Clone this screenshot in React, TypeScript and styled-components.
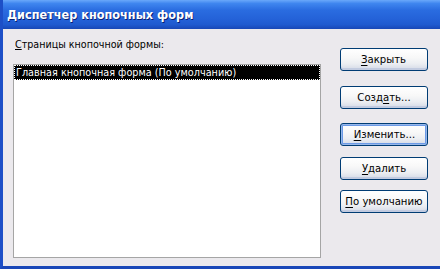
import styled, { createGlobalStyle } from "styled-components"

const GlobalStyle = createGlobalStyle`
  html, body {
    margin: 0;
    padding: 0;
    background: #ebe9ed;
  }
  body {
    font-family: Tahoma, "DejaVu Sans", "Liberation Sans", sans-serif;
  }
`

const Window = styled.div`
  width: 440px;
  height: 269px;
  display: flex;
  flex-direction: column;
  box-sizing: border-box;
  border-left: 3px solid #1d4fc7;
  border-bottom: 3px solid #1a47b8;
  background: #ebe9ed;
  overflow: hidden;
`

const TitleBar = styled.div`
  height: 29px;
  flex: none;
  margin-left: -3px;
  display: flex;
  align-items: center;
  padding-left: 7px;
  background: linear-gradient(
    180deg,
    #6aa8fa 0%,
    #3f86ef 12%,
    #2a6ce0 35%,
    #2462d8 65%,
    #1f5acf 85%,
    #1847b6 100%
  );
`

const TitleText = styled.span`
  display: inline-block;
  color: #fff;
  font-family: "DejaVu Sans", Tahoma, sans-serif;
  font-weight: bold;
  font-size: 13px;
  text-shadow: 1px 1px 0 #0a1f72;
  transform: scaleX(0.87);
  transform-origin: left center;
  white-space: nowrap;
`

const Body = styled.div`
  flex: 1;
  display: flex;
  padding: 9px 0 0 10px;
`

const LeftColumn = styled.div`
  display: flex;
  flex-direction: column;
`

const Caption = styled.div`
  height: 14px;
  line-height: 14px;
  font-size: 11px;
  color: #000;
  margin: 0 0 12px 2px;
  font-family: "DejaVu Sans", sans-serif;
  transform: scaleX(0.87);
  transform-origin: left center;
`

const ListBox = styled.div`
  width: 308px;
  height: 194px;
  box-sizing: border-box;
  background: #fff;
  border: 1px solid #a5a5a5;
`

const ListItem = styled.div<{ $selected?: boolean }>`
  height: 15px;
  line-height: 15px;
  box-sizing: border-box;
  padding-left: 2px;
  font-size: 11px;
  font-family: "DejaVu Sans", sans-serif;
  color: ${({ $selected }) => ($selected ? "#fff" : "#000")};
  background: ${({ $selected }) => ($selected ? "#000" : "transparent")};
  outline: ${({ $selected }) => ($selected ? "1px dotted #fff" : "none")};
  outline-offset: -1px;
  white-space: nowrap;
  & span {
    display: inline-block;
    transform: scaleX(0.88);
    transform-origin: left center;
  }
`

const ButtonColumn = styled.div`
  display: flex;
  flex-direction: column;
  margin-left: 19px;
`

const Button = styled.button<{ $top: number; $default?: boolean }>`
  width: 88px;
  height: 23px;
  margin-top: ${({ $top }) => $top}px;
  padding: 0;
  box-sizing: border-box;
  border: 1px solid #003c74;
  border-radius: 3px;
  background: linear-gradient(
    180deg,
    #ffffff 0%,
    #f8f8f8 40%,
    #eceef2 70%,
    #d3d9e6 100%
  );
  box-shadow: ${({ $default }) =>
    $default
      ? "inset 0 0 0 1px #98b8ea, inset 0 0 0 2px #6c9ae6"
      : "inset 0 -2px 0 #c2cbe0"};
  font-family: "DejaVu Sans", sans-serif;
  font-size: 11px;
  color: #000;
  cursor: default;
  & span {
    display: inline-block;
    transform: scaleX(0.92);
  }
  & u {
    text-decoration: underline;
    text-underline-offset: 2px;
  }
`

export default function App() {
  return (
    <>
      <GlobalStyle />
      <Window>
        <TitleBar>
          <TitleText>Диспетчер кнопочных форм</TitleText>
        </TitleBar>
        <Body>
          <LeftColumn>
            <Caption>
              <u>С</u>траницы кнопочной формы:
            </Caption>
            <ListBox>
              <ListItem $selected>
                <span>Главная кнопочная форма (По умолчанию)</span>
              </ListItem>
            </ListBox>
          </LeftColumn>
          <ButtonColumn>
            <Button $top={10}>
              <span><u>З</u>акрыть</span>
            </Button>
            <Button $top={15}>
              <span>Созд<u>а</u>ть...</span>
            </Button>
            <Button $top={14} $default>
              <span><u>И</u>зменить...</span>
            </Button>
            <Button $top={11}>
              <span><u>У</u>далить</span>
            </Button>
            <Button $top={10}>
              <span><u>П</u>о умолчанию</span>
            </Button>
          </ButtonColumn>
        </Body>
      </Window>
    </>
  )
}
